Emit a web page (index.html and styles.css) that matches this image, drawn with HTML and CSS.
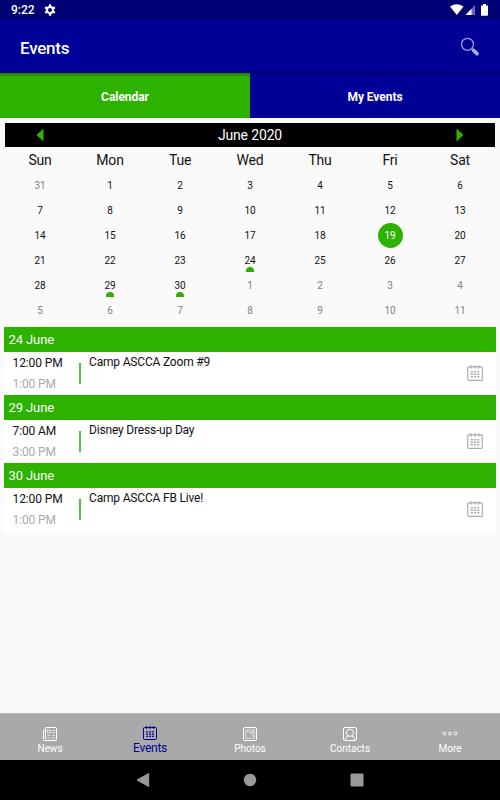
FILE: index.html
```html
<!DOCTYPE html>
<html lang="en">
<head>
<meta charset="UTF-8">
<meta name="viewport" content="width=device-width, initial-scale=1.0">
<title>Events</title>
<link rel="stylesheet" href="styles.css">
</head>

<body>
<svg class="symbols" width="0" height="0">
    <symbol id="calendar-icon" viewBox="0 0 16 16">
        <path d="M2.500 2.500h11q1 0 1 1v10q0 1-1 1h-11q-1 0-1-1v-10q0-1 1-1zM4.500 1v3M8 1v3M11.500 1v3" fill="none" stroke="currentColor"/>
        <path d="M4.200 6.800h7.600M4.200 9.100h7.600M4.200 11.400h7.600" fill="none" stroke="currentColor" stroke-width="1.300" stroke-dasharray="1.900 .95"/>
    </symbol>
</svg>

<div id="status-bar">
    <span class="clock">9:22</span>
    <svg class="gear" width="12" height="12" viewBox="0 0 12 12">
        <circle cx="6" cy="6" r="3.100" fill="none" stroke="#fff" stroke-width="2.200"/>
        <path d="M6 .3v2M6 9.700v2M1.100 3.200l1.700 1M9.200 7.800l1.700 1M1.100 8.800l1.700-1M9.200 4.200l1.700-1" stroke="#fff" stroke-width="2.200"/>
    </svg>
    <svg class="signals" width="40" height="12" viewBox="0 0 40 12">
        <path d="M0 2.500Q6.500 -1.800 13.500 2.500L6.800 11z" fill="#fff"/>
        <path d="M25 1v10h-9.500z" fill="#6666b4"/>
        <path d="M21.500 4.700V11h-6z" fill="#fff"/>
        <path d="M31 1.500h2V0h3v1.500h2V11q0 .7-.7.7h-5.600q-.7 0-.7-.7z" fill="#fff"/>
    </svg>
</div>

<div id="app-bar">
    <h1>Events</h1>
    <svg width="20" height="20" viewBox="0 0 20 20">
        <circle cx="7.500" cy="7.300" r="6" fill="none" stroke="#9c9cc6" stroke-width="1.300"/>
        <path d="M11.800 11.700l1.500 1.500" stroke="#9c9cc6" stroke-width="1.400"/>
        <path d="M13.600 13.400l3.400 3.300" stroke="#a8a8dc" stroke-width="3.800" stroke-linecap="round"/>
    </svg>
</div>

<div id="tabs">
    <div class="tab active">Calendar</div>
    <div class="tab">My Events</div>
</div>

<div id="month-bar">
    <svg width="8" height="14" viewBox="0 0 8 14"><path d="M7.500 .5v13L.5 7z" fill="#2db200"/></svg>
    <span>June 2020</span>
    <svg width="8" height="14" viewBox="0 0 8 14"><path d="M.5 .5v13l7-6.500z" fill="#2db200"/></svg>
</div>

<div id="weekdays">
    <span>Sun</span><span>Mon</span><span>Tue</span><span>Wed</span><span>Thu</span><span>Fri</span><span>Sat</span>
</div>
<div id="days">
    <span class="other">31</span><span>1</span><span>2</span><span>3</span><span>4</span><span>5</span><span>6</span>
    <span>7</span><span>8</span><span>9</span><span>10</span><span>11</span><span>12</span><span>13</span>
    <span>14</span><span>15</span><span>16</span><span>17</span><span>18</span><span class="today">19</span><span>20</span>
    <span>21</span><span>22</span><span>23</span><span class="marked">24</span><span>25</span><span>26</span><span>27</span>
    <span>28</span><span class="marked">29</span><span class="marked">30</span><span class="other">1</span><span class="other">2</span><span class="other">3</span><span class="other">4</span>
    <span class="other">5</span><span class="other">6</span><span class="other">7</span><span class="other">8</span><span class="other">9</span><span class="other">10</span><span class="other">11</span>
</div>

<div id="event-list">
    <h2>24 June</h2>
    <div class="event">
        <div class="times"><span>12:00 PM</span><span class="end">1:00 PM</span></div>
        <div class="line"></div>
        <div class="title">Camp ASCCA Zoom #9</div>
        <svg width="18" height="18"><use href="#calendar-icon"/></svg>
    </div>
    <h2>29 June</h2>
    <div class="event">
        <div class="times"><span>7:00 AM</span><span class="end">3:00 PM</span></div>
        <div class="line"></div>
        <div class="title">Disney Dress-up Day</div>
        <svg width="18" height="18"><use href="#calendar-icon"/></svg>
    </div>
    <h2>30 June</h2>
    <div class="event">
        <div class="times"><span>12:00 PM</span><span class="end">1:00 PM</span></div>
        <div class="line"></div>
        <div class="title">Camp ASCCA FB Live!</div>
        <svg width="18" height="18"><use href="#calendar-icon"/></svg>
    </div>
</div>

<div id="bottom-nav">
    <div class="nav-item">
        <svg width="16" height="16" viewBox="0 0 16 16" fill="none" stroke="currentColor">
            <path d="M4 1.500h9.500q1 0 1 1v11q0 1-1 1h-11q-1 0-1-1V4.500q0-1 1-1h1V13M3.500 13V2.500q0-1 1-1"/>
            <path d="M5.500 4h3v3h-3zM10 4.500h3M10 6.500h3M5.500 9.500h3M10 9.500h3M5.500 12h3M10 12h3" stroke-width=".9" stroke-opacity=".75"/>
        </svg>
        <span>News</span>
    </div>
    <div class="nav-item active">
        <svg width="16" height="16"><use href="#calendar-icon"/></svg>
        <span>Events</span>
    </div>
    <div class="nav-item">
        <svg width="16" height="16" viewBox="0 0 16 16" fill="none" stroke="currentColor">
            <rect x="1.500" y="1.500" width="13" height="13" rx="1.500"/>
            <path d="M3.800 3.800h8.400v8.400H3.800zM4 7l2-2 6 6M8 7l2-2 2 1M9 8l3-2" stroke-width=".8" stroke-opacity=".8"/>
        </svg>
        <span>Photos</span>
    </div>
    <div class="nav-item">
        <svg width="16" height="16" viewBox="0 0 16 16" fill="none" stroke="currentColor">
            <rect x="1.500" y="1.500" width="13" height="13" rx="1.500"/>
            <circle cx="8" cy="6.800" r="3.600"/>
            <path d="M3.500 13.500q0-2.500 2.800-3.500M12.500 13.500q0-2.500-2.800-3.500"/>
        </svg>
        <span>Contacts</span>
    </div>
    <div class="nav-item">
        <svg width="16" height="16" viewBox="0 0 16 16" fill="none" stroke="currentColor">
            <circle cx="2.500" cy="7.500" r="1.400"/><circle cx="8" cy="7.500" r="1.400"/><circle cx="13.500" cy="7.500" r="1.400"/>
        </svg>
        <span>More</span>
    </div>
</div>

<div id="system-nav">
    <svg width="14" height="16" viewBox="0 0 14 16"><path d="M12.700 1.500v13L1 8z" fill="#999" stroke="#999" stroke-linejoin="round"/></svg>
    <svg width="14" height="14" viewBox="0 0 14 14"><circle cx="7" cy="7" r="6.200" fill="#999"/></svg>
    <svg width="14" height="14" viewBox="0 0 14 14"><rect x=".5" y=".5" width="13" height="13" rx="1" fill="#999"/></svg>
</div>
</body>
</html>
```
FILE: styles.css
```css
* {
    box-sizing: border-box;
}
body {
    margin: 0;
    height: 800px;
    display: flex;
    flex-direction: column;
    overflow: hidden;
    background-color: #fafafa;
    font-family: Roboto, sans-serif;
    color: #111;
}
svg {
    display: block;
    flex: none;
}
.symbols {
    position: absolute;
}
#status-bar {
    display: flex;
    align-items: center;
    height: 20px;
    padding: 0 11px;
    background-color: #000075;
    color: #fff;
}
.clock {
    font-size: 12px;
    font-weight: 500;
    width: 33px;
}
.signals {
    margin-left: auto;
    margin-right: -1px;
}
#app-bar {
    display: flex;
    align-items: center;
    justify-content: space-between;
    height: 53px;
    padding: 0 20px;
    background-color: #000099;
    color: #fff;
}
#app-bar h1 {
    margin: 2px 0 0;
    font-size: 17px;
    font-weight: 500;
    letter-spacing: -0.250px;
}
#tabs {
    display: flex;
    height: 45px;
}
.tab {
    flex: 1;
    line-height: 48px;
    text-align: center;
    font-size: 12px;
    font-weight: 700;
    letter-spacing: -0.050px;
    color: #fff;
    background: linear-gradient(rgba(0, 0, 0, 0.3), rgba(0, 0, 0, 0) 4px) #000099;
}
.tab.active {
    background-color: #2db200;
}
#month-bar {
    display: flex;
    align-items: center;
    justify-content: space-between;
    height: 24.500px;
    margin: 4.500px 5px 0;
    padding: 0 31px;
    background-color: #000;
    color: #fff;
    font-size: 14px;
    letter-spacing: -0.150px;
}
#weekdays, #days {
    display: grid;
    grid-template-columns: repeat(7, 70px);
    margin: 0 5px;
    text-align: center;
}
#weekdays {
    height: 25.500px;
    font-size: 14px;
    letter-spacing: -0.200px;
    line-height: 27px;
}
#days {
    grid-auto-rows: 25px;
    font-size: 10px;
    line-height: 25px;
}
#days span {
    position: relative;
}
#days .other {
    color: #808080;
}
#days .today {
    width: 25px;
    justify-self: center;
    border-radius: 50%;
    background-color: #2db200;
    color: #fff;
}
#days .marked::after {
    content: "";
    position: absolute;
    left: 31px;
    top: 19px;
    width: 8px;
    height: 5px;
    border-radius: 4px 4px 0 0;
    background-color: #2db200;
}
#event-list {
    margin: 4.300px 4px 0;
}
#event-list h2 {
    margin: 0;
    height: 25px;
    padding-left: 4.500px;
    background-color: #2db200;
    color: #fff;
    font-size: 13px;
    font-weight: 400;
    letter-spacing: -0.100px;
    line-height: 25px;
}
.event {
    display: flex;
    height: 43.300px;
    padding-right: 12px;
    background-color: #fff;
}
.times {
    width: 75px;
    padding: 1px 0 0 8.500px;
    font-size: 12px;
    letter-spacing: -0.100px;
}
.times span {
    display: block;
    height: 21px;
    line-height: 21px;
}
.times .end {
    color: #aaa;
}
.line {
    width: 2px;
    height: 21px;
    margin-top: 11px;
    background-color: #55bd50;
}
.title {
    flex: 1;
    padding: 3px 0 0 8px;
    font-size: 12px;
    letter-spacing: -0.180px;
    line-height: 14px;
}
.event svg {
    margin-top: 12px;
    color: #aaa;
}
#bottom-nav {
    display: flex;
    height: 47px;
    margin-top: auto;
    padding-top: 12px;
    border-top: 1px solid #bbb;
    background-color: #a9a9a9;
    color: #fff;
}
.nav-item {
    flex: 1;
    display: flex;
    flex-direction: column;
    align-items: center;
    font-size: 10px;
    line-height: 14px;
}
.nav-item.active {
    margin-top: -1px;
    font-size: 12px;
    letter-spacing: -0.250px;
    color: #000099;
}
#system-nav {
    display: flex;
    justify-content: center;
    align-items: center;
    gap: 93px;
    height: 40px;
    background-color: #000;
}
```
